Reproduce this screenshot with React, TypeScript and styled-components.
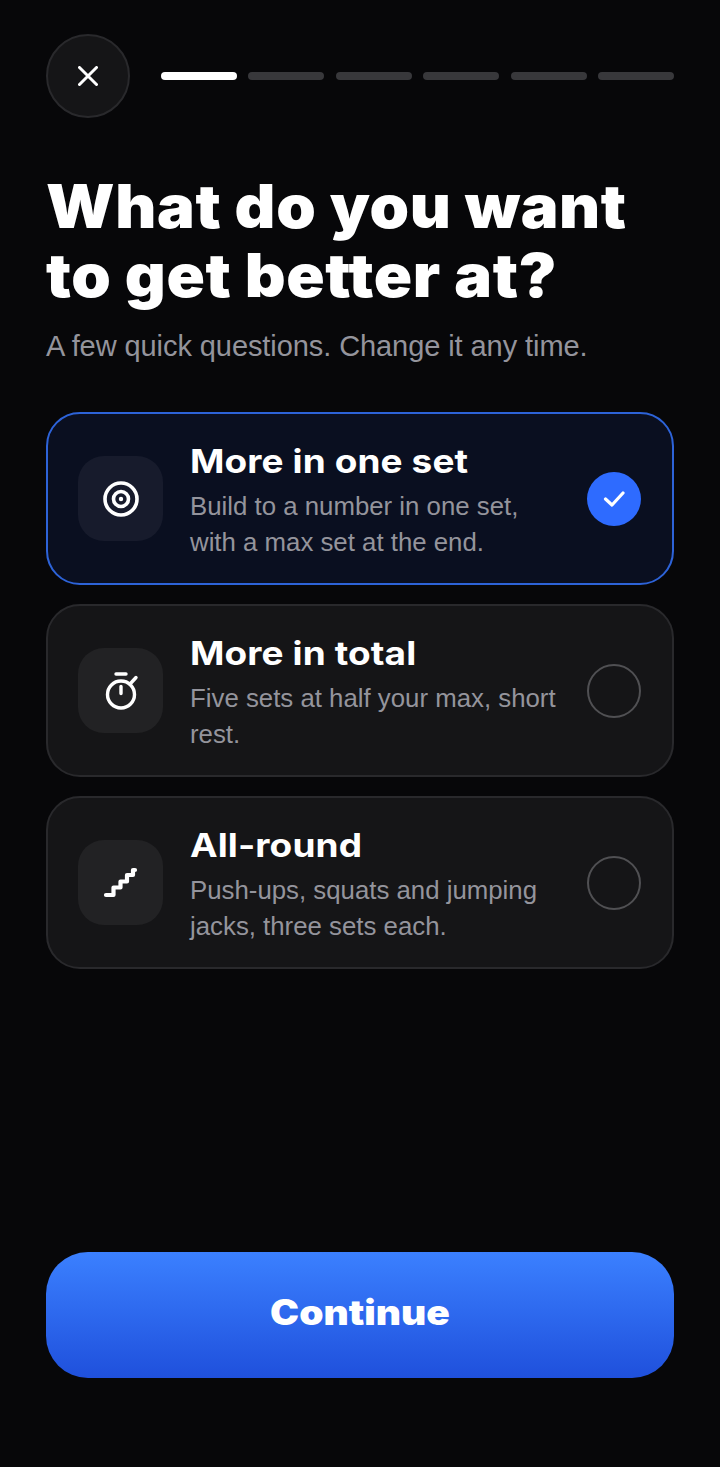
import React from "react";
import styled, { createGlobalStyle } from "styled-components";

const Global = createGlobalStyle`
  html, body { margin: 0; padding: 0; background: #070709; }
  #root { min-height: 1467px; }
  * { box-sizing: border-box; }
`;

const Page = styled.main`
  width: 720px;
  height: 1467px;
  padding: 34px 46px 89px;
  display: flex;
  flex-direction: column;
  background: #070709;
  color: #fff;
  font-family: "Liberation Sans", Arial, sans-serif;
`;

const TopBar = styled.header`
  display: flex;
  align-items: center;
  gap: 31px;
`;

const CloseButton = styled.button`
  width: 84px;
  height: 84px;
  flex: none;
  border-radius: 50%;
  border: 2px solid #29292c;
  background: #151517;
  color: #fff;
  display: flex;
  align-items: center;
  justify-content: center;
  padding: 0;
`;

const Progress = styled.div`
  flex: 1;
  display: grid;
  grid-template-columns: repeat(6, 1fr);
  gap: 11.5px;
`;

const Segment = styled.span<{ $active?: boolean }>`
  height: 8px;
  border-radius: 4px;
  background: ${(p) => (p.$active ? "#ffffff" : "#38383b")};
`;

const Heading = styled.h1`
  margin: 54px 0 0;
  font-family: Inter, sans-serif;
  font-weight: 900;
  font-size: 60px;
  line-height: 69px;
  letter-spacing: 0.6px;
  color: #fff;
  transform: scaleX(1.056);
  transform-origin: left center;
`;

const Subtitle = styled.p`
  margin: 17px 0 0;
  font-size: 29px;
  line-height: 38px;
  letter-spacing: -0.08px;
  color: #94949c;
`;

const Options = styled.div`
  margin-top: 47px;
  display: flex;
  flex-direction: column;
  gap: 19px;
`;

const Card = styled.div<{ $selected?: boolean }>`
  height: 173px;
  padding: 0 31px 0 30px;
  display: flex;
  align-items: center;
  gap: 27px;
  border-radius: 34px;
  border: 2px solid ${(p) => (p.$selected ? "#2d63d8" : "#29292c")};
  background: ${(p) => (p.$selected ? "#0a0f20" : "#151517")};
`;

const IconTile = styled.div<{ $selected?: boolean }>`
  width: 85px;
  height: 85px;
  flex: none;
  border-radius: 26px;
  background: ${(p) => (p.$selected ? "#171b2c" : "#222224")};
  display: flex;
  align-items: center;
  justify-content: center;
  color: #fff;
`;

const Copy = styled.div`
  flex: 1;
  min-width: 0;
  padding-top: 4px;
`;

const Title = styled.div`
  font-family: Inter, sans-serif;
  font-weight: 700;
  font-size: 33px;
  line-height: 40px;
  letter-spacing: 0.1px;
  color: #fff;
  white-space: nowrap;
  transform: scaleX(1.12);
  transform-origin: left center;
`;

const Description = styled.div`
  margin-top: 7px;
  font-size: 25.8px;
  line-height: 36.5px;
  white-space: nowrap;
  color: #94949c;
`;

const Radio = styled.div<{ $selected?: boolean }>`
  width: 54px;
  height: 54px;
  flex: none;
  border-radius: 50%;
  border: ${(p) => (p.$selected ? "none" : "2px solid #505053")};
  background: ${(p) => (p.$selected ? "#2e6bff" : "transparent")};
  display: flex;
  align-items: center;
  justify-content: center;
`;

const Spacer = styled.div`
  flex: 1;
`;

const ContinueButton = styled.button`
  height: 126px;
  border: none;
  padding: 0 0 6px;
  border-radius: 42px;
  background: linear-gradient(180deg, #3b80ff 0%, #1f50dc 100%);
  color: #fff;
  font-family: Inter, sans-serif;
  font-weight: 900;
  font-size: 35px;
`;

const ContinueLabel = styled.span`
  display: inline-block;
  transform: scaleX(1.11);
`;

const Svg = styled.svg`
  display: block;
  fill: none;
  stroke: currentColor;
  stroke-linecap: round;
  stroke-linejoin: round;
`;

const CloseIcon = () => (
  <Svg width="20" height="20" viewBox="0 0 20 20" strokeWidth="3">
    <path d="M1.5 1.5 18.5 18.5M18.5 1.5 1.5 18.5" />
  </Svg>
);

const TargetIcon = () => (
  <Svg width="36" height="36" viewBox="0 0 36 36" strokeWidth="3.6">
    <circle cx="18" cy="18" r="16" />
    <circle cx="18" cy="18" r="7.5" />
    <circle cx="18" cy="18" r="1.5" fill="currentColor" strokeWidth="1.4" />
  </Svg>
);

const TimerIcon = () => (
  <Svg width="36" height="40" viewBox="0 0 36 40" strokeWidth="3.4">
    <path d="M13 3h10" />
    <circle cx="18" cy="23.5" r="13.5" />
    <path d="M18 15.5v7M27.5 12.5l5.5-6" />
  </Svg>
);

const StairsIcon = () => (
  <Svg width="36" height="32" viewBox="0 0 36 32" strokeWidth="4.2">
    <path d="M3 28h7.5v-7.5h7v-6h6.5V8h6V3h2" />
  </Svg>
);

const CheckIcon = () => (
  <Svg width="22" height="17" viewBox="0 0 22 17" strokeWidth="3.2" color="#fff">
    <path d="M2.5 9 9 15 20 3" />
  </Svg>
);

const options = [
  { title: "More in one set", desc: ["Build to a number in one set,", "with a max set at the end."], icon: <TargetIcon />, selected: true },
  { title: "More in total", desc: ["Five sets at half your max, short", "rest."], icon: <TimerIcon />, selected: false },
  { title: "All-round", desc: ["Push-ups, squats and jumping", "jacks, three sets each."], icon: <StairsIcon />, selected: false },
];

export default function App() {
  return (
    <>
      <Global />
      <Page>
        <TopBar>
          <CloseButton aria-label="Close">
            <CloseIcon />
          </CloseButton>
          <Progress>
            {[0, 1, 2, 3, 4, 5].map((i) => (
              <Segment key={i} $active={i === 0} />
            ))}
          </Progress>
        </TopBar>
        <Heading>
          What do you want
          <br />
          to get better at?
        </Heading>
        <Subtitle>A few quick questions. Change it any time.</Subtitle>
        <Options>
          {options.map((o) => (
            <Card key={o.title} $selected={o.selected}>
              <IconTile $selected={o.selected}>{o.icon}</IconTile>
              <Copy>
                <Title>{o.title}</Title>
                <Description>
                  {o.desc[0]}
                  <br />
                  {o.desc[1]}
                </Description>
              </Copy>
              <Radio $selected={o.selected}>{o.selected && <CheckIcon />}</Radio>
            </Card>
          ))}
        </Options>
        <Spacer />
        <ContinueButton>
          <ContinueLabel>Continue</ContinueLabel>
        </ContinueButton>
      </Page>
    </>
  );
}
